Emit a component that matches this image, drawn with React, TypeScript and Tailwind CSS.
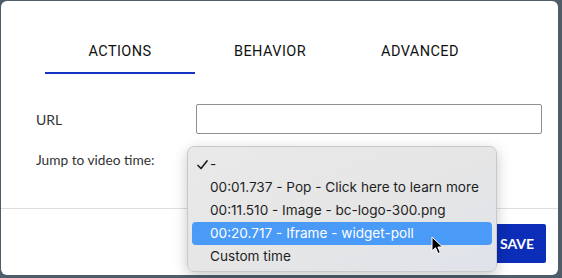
import React from 'react'

const tabs = ['ACTIONS', 'BEHAVIOR', 'ADVANCED']

const options = [
  { label: '-', checked: true },
  { label: '00:01.737 - Pop - Click here to learn more' },
  { label: '00:11.510 - Image - bc-logo-300.png' },
  { label: '00:20.717 - Iframe - widget-poll', active: true },
  { label: 'Custom time' },
]

function Cursor() {
  return (
    <svg width="14" height="20" viewBox="0 0 14 20" className="absolute left-[431px] top-[236px]">
      <path
        d="M1 1 L1 15 L4.5 11.8 L7 17.5 L9.3 16.5 L6.9 11 L11.5 11 Z"
        fill="#000"
        stroke="#fff"
        strokeWidth="1"
        strokeLinejoin="round"
      />
    </svg>
  )
}

export default function App() {
  return (
    <div className="relative w-[562px] h-[278px] bg-[#4f5d69] pt-[1px] pl-[1px] pr-[4px] pb-[3px] overflow-hidden">
      <div className="h-full bg-white rounded-[6px] flex flex-col">
        <div className="flex pl-[44px] pt-[43px]">
          {tabs.map((t, i) => (
            <div
              key={t}
              className={`w-[150px] text-center pb-[12px] border-b-2 text-[14.5px] leading-[16px] tracking-[0.03em] text-[#111] ${
                i === 0 ? 'border-[#1634c4]' : 'border-transparent'
              }`}
              style={{ fontFamily: 'Roboto, "Liberation Sans", sans-serif' }}
            >
              {t}
            </div>
          ))}
        </div>

        <div className="flex flex-col gap-[12px] pl-[35px] pr-[16px] pt-[30px] h-[134px]" style={{ fontFamily: 'Lato, sans-serif' }}>
          <div className="flex items-center">
            <div className="w-[160px] text-[14px] text-[#333]">URL</div>
            <div className="flex-1 h-[30px] border border-[#8f8f8f] rounded-[2px]" />
          </div>
          <div className="flex items-center">
            <div className="w-[160px] text-[13.7px] text-[#333]">Jump to video time:</div>
            <div className="w-[141px] h-[29px] border border-[#8f8f8f] rounded-[3px]" />
          </div>
        </div>

        <div className="border-t border-[#dedede] flex-1 flex justify-end items-start pt-[15px] pr-[12px]">
          <button
            className="h-[39px] w-[58px] bg-[#0b2db8] text-white text-[14px] font-bold rounded-[2px]"
            style={{ fontFamily: 'Lato, sans-serif' }}
          >
            SAVE
          </button>
        </div>
      </div>

      <div
        className="absolute left-[187px] top-[146px] w-[310px] h-[126px] rounded-[7px] border border-[#c9c9c9] bg-gradient-to-br from-[#e9e9e9] via-[#e6e6e6] to-[#dfe3ea] shadow-[0_4px_14px_rgba(0,0,0,0.22)] pt-[6px] px-[4px]"
        style={{ fontFamily: 'Inter, "Noto Sans", sans-serif' }}
      >
        {options.map((o) => (
          <div
            key={o.label}
            className={`relative h-[23px] flex items-center pl-[18px] rounded-[4px] text-[13.6px] ${
              o.active ? 'bg-[#4a9af8] text-white' : 'text-[#1f1f1f]'
            }`}
          >
            {o.checked && (
              <svg width="11" height="10" viewBox="0 0 11 10" className="absolute left-[5px] top-[7px]">
                <path d="M1 5.5 L4 8.5 L10 1" fill="none" stroke="#222" strokeWidth="1.7" strokeLinecap="round" strokeLinejoin="round" />
              </svg>
            )}
            {o.label}
          </div>
        ))}
      </div>

      <Cursor />
    </div>
  )
}
